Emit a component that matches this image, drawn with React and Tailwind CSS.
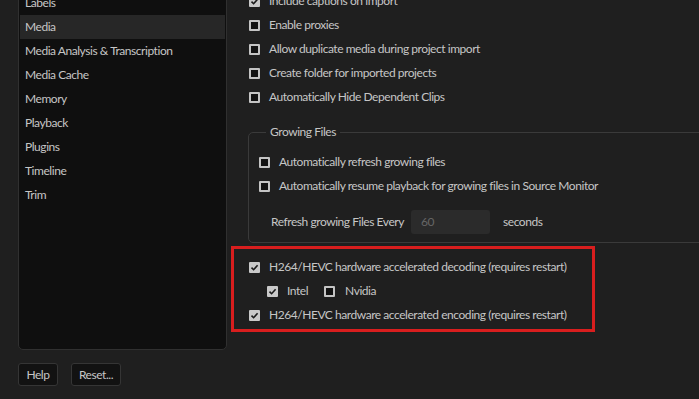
import { useState } from "react";

const sections = [
  "Labels",
  "Media",
  "Media Analysis & Transcription",
  "Media Cache",
  "Memory",
  "Playback",
  "Plugins",
  "Timeline",
  "Trim",
];

function Check({ checked, className = "" }) {
  if (checked) {
    return (
      <span
        className={
          "w-[11px] h-[11px] shrink-0 rounded-[1px] bg-[#c9c9c9] flex items-center justify-center " +
          className
        }
      >
        <svg width="9" height="9" viewBox="0 0 9 9">
          <path d="M1.5 4.6 L3.6 6.7 L7.6 2.2" fill="none" stroke="#1a1a1a" strokeWidth="1.6" />
        </svg>
      </span>
    );
  }
  return (
    <span
      className={
        "block w-[11px] h-[11px] shrink-0 rounded-[1px] border-2 border-[#c4c4c4] bg-[#121212] " +
        className
      }
    />
  );
}

function Row({ checked, label }) {
  return (
    <div className="h-[24px] flex items-center gap-[9px] whitespace-nowrap">
      <Check checked={checked} />
      <span>{label}</span>
    </div>
  );
}

export default function App() {
  const [selected] = useState("Media");

  return (
    <div
      className="w-[699px] h-[399px] overflow-hidden bg-[#1f1f1f] text-[12px] tracking-[-0.45px] text-[#c6c6c6] flex"
      style={{ fontFamily: "Lato, 'Open Sans', sans-serif" }}
    >
      <div className="w-[231px] shrink-0 pl-[18px] pr-[4px] flex flex-col">
        <div className="h-[361px] -mt-[11px] bg-[#0f0f0f] border border-[#303030] rounded-b-[5px] flex flex-col pt-px px-px">
          {sections.map((s) => (
            <div
              key={s}
              className={
                "h-[24px] flex items-center pl-[5px] " +
                (s === selected ? "bg-[#272727]" : "")
              }
            >
              {s}
            </div>
          ))}
        </div>
        <div className="mt-[13px] flex gap-[13px]">
          <button className="h-[23px] w-[40px] rounded-[3px] bg-[#121212] border border-[#353535] text-[#c6c6c6]">
            Help
          </button>
          <button className="h-[23px] w-[50px] rounded-[3px] bg-[#121212] border border-[#353535] text-[#c6c6c6]">
            Reset...
          </button>
        </div>
      </div>

      <div className="flex-1 flex flex-col">
        <div className="-mt-[11px] pl-[18px]">
          <Row checked label="Include captions on import" />
          <Row label="Enable proxies" />
          <Row label="Allow duplicate media during project import" />
          <Row label="Create folder for imported projects" />
          <Row label="Automatically Hide Dependent Clips" />
        </div>

        <fieldset className="mt-[14px] ml-[17px] -mr-[20px] h-[120px] border border-[#3a3a3a] rounded-[5px] pl-[10px] pt-[9px]">
          <legend className="ml-[7px] px-[4px] text-[#c6c6c6]">Growing Files</legend>
          <Row label="Automatically refresh growing files" />
          <Row label="Automatically resume playback for growing files in Source Monitor" />
          <div className="mt-[12px] h-[24px] flex items-center pl-[12px] whitespace-nowrap">
            <span className="w-[140px]">Refresh growing Files Every</span>
            <div className="w-[79px] h-[24px] rounded-[3px] bg-[#2b2b2b] text-[#666] flex items-center pl-[10px]">
              60
            </div>
            <span className="ml-[13px]">seconds</span>
          </div>
        </fieldset>

        <div className="mt-[3px] w-[364px] h-[86px] border-[3px] border-[#d81e1e] pl-[15px] pt-[6px]">
          <Row checked label="H264/HEVC hardware accelerated decoding (requires restart)" />
          <div className="h-[24px] flex items-center pl-[18px]">
            <Check checked />
            <span className="ml-[9px]">Intel</span>
            <Check className="ml-[16px]" />
            <span className="ml-[10px]">Nvidia</span>
          </div>
          <Row checked label="H264/HEVC hardware accelerated encoding (requires restart)" />
        </div>
      </div>
    </div>
  );
}
